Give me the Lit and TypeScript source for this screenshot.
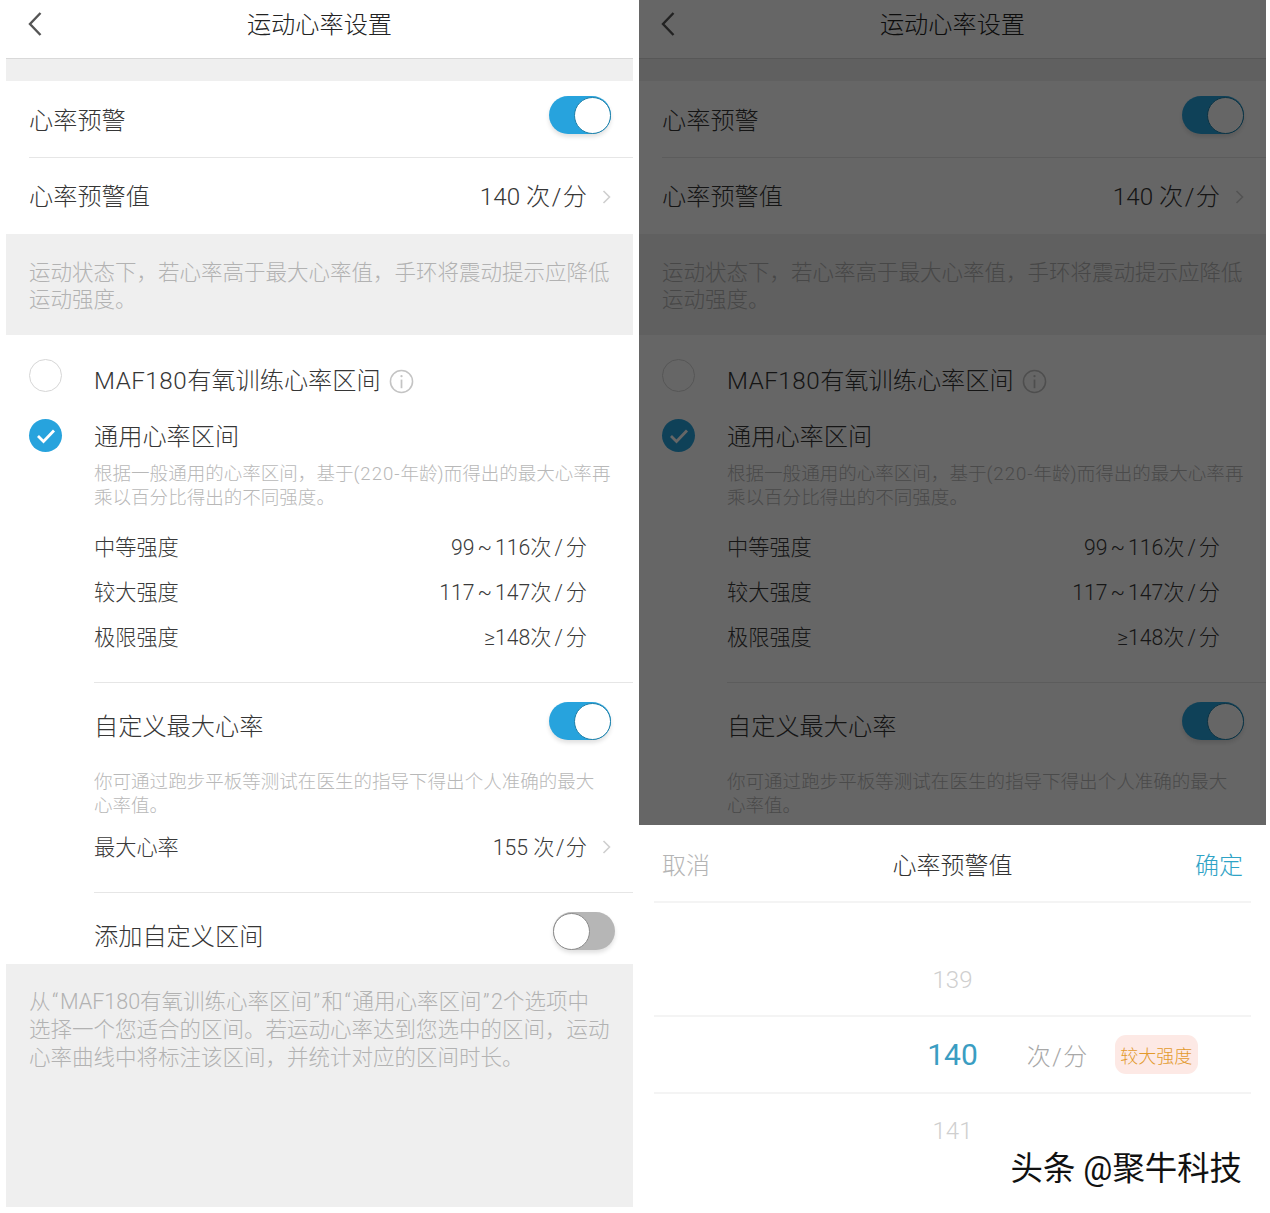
import { LitElement, html, css, svg } from "lit";
import { customElement, property } from "lit/decorators.js";

const chevronRight = html`<svg class="chev" viewBox="0 0 9 14" width="9" height="14"><path d="M1.5 1l6 6-6 6" fill="none" stroke="#cfcfcf" stroke-width="1.6"/></svg>`;

@customElement("hr-toggle")
class HrToggle extends LitElement {
  @property({ type: Boolean }) on = false;
  static styles = css`
    :host { display: block; width: 62px; height: 38px; }
    .track { width: 62px; height: 38px; border-radius: 19px; background: #b6b6b6; display: flex; align-items: center; box-sizing: border-box; box-shadow: 0 3px 4px rgba(0,0,0,.12); }
    .track.on { background: #27a3dd; justify-content: flex-end; }
    .thumb { width: 37px; height: 37px; border-radius: 50%; background: #fff; box-sizing: border-box; border: 1px solid #8b8b8b; }
    .on .thumb { border: 1.5px solid #1d7fa8; }
  `;
  render() {
    return html`<div class="track ${this.on ? "on" : ""}"><div class="thumb"></div></div>`;
  }
}

@customElement("hr-screen")
class HrScreen extends LitElement {
  @property({ type: Boolean }) dim = false;
  static styles = css`
    :host { display: block; width: 627px; height: 1207px; position: relative; overflow: hidden; background: #efefef; font-family: Roboto, "Noto Sans CJK SC", "Noto Sans", sans-serif; font-weight: 300; color: #363636; flex: none; }
    .head { height: 58px; background: #fff; border-bottom: 1px solid #d9d9d9; display: flex; align-items: flex-start; justify-content: center; position: relative; font-size: 24.2px; color: #222; line-height: 50px; }
    .back { position: absolute; left: 22px; top: 11px; }
    .gap { height: 22px; }
    .row { height: 76px; background: #fff; display: flex; align-items: center; justify-content: space-between; padding: 0 22px 0 23px; font-size: 24.2px; line-height: 34px; white-space: nowrap; }
    .row .t { margin-top: 4px; }
    .row .t2 { margin-top: 2px; }
    .row hr-toggle { margin-bottom: 8px; }
    .rule { height: 1px; background: #fff; }
    .rule i { display: block; height: 1px; margin-left: 23px; background: #e6e6e6; }
    .val { display: flex; align-items: center; gap: 15px; }
    .u { letter-spacing: 1.5px; margin-right: -1.5px; }
    .range .u { letter-spacing: 3px; margin-right: -3px; }
    .chev { flex: none; }
    .max .chev { margin-top: 3px; }
    .note { padding: 25px 23px 0; font-size: 21.5px; line-height: 27px; color: #b2b2b2; white-space: nowrap; }
    .note.a { height: 76px; }
    .note.b { padding-top: 24px; line-height: 28px; }
    .q { padding: 0 1.5px; }
    .section { background: #fff; padding: 24px 22px 0 23px; height: 605px; }
    .opt { display: flex; }
    .mark { width: 65px; flex: none; }
    .radio { width: 33px; height: 33px; border-radius: 50%; box-sizing: border-box; border: 1.5px solid #d6d6d6; display: flex; align-items: center; justify-content: center; }
    .radio.sel { background: #27a3dd; border: none; }
    .body { flex: 1; min-width: 0; }
    .opt.first { height: 60px; }
    .lab { font-size: 24.2px; line-height: 34px; display: flex; align-items: center; gap: 8px; white-space: nowrap; }
    .lab .l { letter-spacing: .5px; }
    .opt.first .lab { margin-top: 5px; }
    .opt .lab.g { margin-top: 1px; }
    .desc { font-size: 18.55px; line-height: 24px; color: #b8b8b8; white-space: nowrap; }
    .desc .l { letter-spacing: 1px; }
    .opt .desc.one { margin-top: 8px; }
    .ranges { margin-top: 13px; padding-right: 24px; }
    .range { height: 45px; display: flex; align-items: center; justify-content: space-between; font-size: 21.2px; color: #3a3a3a; white-space: nowrap; }
    .tl { margin: 0 3px; }
    .div { height: 1px; background: #e6e6e6; margin-right: -22px; }
    .ranges + .div { margin-top: 24px; }
    .sw { height: 76px; display: flex; align-items: center; justify-content: space-between; }
    .sw .lab { margin-top: 12px; }
    .desc.two { margin-top: 11px; }
    .max { height: 54px; display: flex; align-items: center; justify-content: space-between; font-size: 21.2px; color: #3a3a3a; white-space: nowrap; }
    .max + .div { margin-top: 20px; }
    .sw.last { height: 71px; }
    .sw.last .lab { margin-top: 17px; }
    .sw.last hr-toggle { margin-top: 5px; margin-right: -4px; }
    .shade { position: absolute; inset: 0; background: rgba(0,0,0,.6); }
    .sheet { position: absolute; left: 0; right: 0; top: 825px; bottom: 0; background: #fff; }
    .sh { height: 76px; display: flex; align-items: center; justify-content: space-between; padding: 0 23px; font-size: 24px; }
    .sh .c { color: #b4b4b4; } .sh .o { color: #2fa3c6; } .sh .m { color: #333; }
    .wheel { margin: 0 15px; display: flex; flex-direction: column; }
    .cell { display: grid; grid-template-columns: 1fr auto 1fr; align-items: center; border-top: 2px solid #f4f4f4; }
    .cell .n { grid-column: 2; font-size: 24px; color: #cfcfcf; }
    .cell.up { height: 114px; padding-top: 59px; box-sizing: border-box; align-items: start; }
    .cell.up .n, .cell.down .n { line-height: 36px; }
    .cell.sel { height: 75px; }
    .cell.sel .n { font-size: 30px; color: #3a9dc2; line-height: 44px; font-weight: 400; }
    .cell.down { height: 76px; box-sizing: border-box; }
    .side { display: flex; align-items: center; margin-left: 49px; white-space: nowrap; }
    .unit { font-size: 24px; color: #a8a8a8; letter-spacing: 1.5px; }
    .badge { margin-left: 26px; width: 83px; height: 39px; border-radius: 11px; background: #fde9e5; color: #e39a2c; font-size: 18px; display: flex; align-items: center; justify-content: center; }
    .wm { position: absolute; right: 24px; bottom: 16px; font-size: 32.4px; line-height: 44px; font-weight: 400; color: #111; white-space: nowrap; text-shadow: 1px 1px 0 #fff; }
  `;

  renderPage() {
    return html`
      <div class="head">
        <svg class="back" viewBox="0 0 14 26" width="14" height="26"><path d="M12.5 2L2 13l10.5 11" fill="none" stroke="#555" stroke-width="2.4"/></svg>
        <span>运动心率设置</span>
      </div>
      <div class="gap"></div>
      <div class="row"><span class="t">心率预警</span><hr-toggle on></hr-toggle></div>
      <div class="rule"><i></i></div>
      <div class="row"><span class="t2">心率预警值</span><span class="val t2"><span>140 <span class="u">次/分</span></span>${chevronRight}</span></div>
      <div class="note a">运动状态下&#xFF0C;若心率高于最大心率值&#xFF0C;手环将震动提示应降低<br />运动强度。</div>
      <div class="section">
        <div class="opt first">
          <div class="mark"><div class="radio"></div></div>
          <div class="body"><div class="lab"><span><span class="l">MAF180</span>有氧训练心率区间</span>
            <svg viewBox="0 0 26 26" width="25" height="25">${svg`<circle cx="13" cy="13" r="11.5" fill="none" stroke="#c4c4c4" stroke-width="1.6"/><path d="M13 11v9" stroke="#c4c4c4" stroke-width="1.8"/><circle cx="13" cy="7.5" r="1.2" fill="#c4c4c4"/>`}</svg>
          </div></div>
        </div>
        <div class="opt">
          <div class="mark"><div class="radio sel">
            <svg viewBox="0 0 20 16" width="20" height="16"><path d="M2 8l5.5 5.5L18 2.5" fill="none" stroke="#fff" stroke-width="2.8"/></svg>
          </div></div>
          <div class="body">
            <div class="lab g">通用心率区间</div>
            <div class="desc one">根据一般通用的心率区间&#xFF0C;基于<span class="l">(220-</span>年龄)而得出的最大心率再<br />乘以百分比得出的不同强度。</div>
            <div class="ranges">
              <div class="range"><span>中等强度</span><span>99<span class="tl">~</span>116<span class="u">次/分</span></span></div>
              <div class="range"><span>较大强度</span><span>117<span class="tl">~</span>147<span class="u">次/分</span></span></div>
              <div class="range"><span>极限强度</span><span>≥148<span class="u">次/分</span></span></div>
            </div>
            <div class="div"></div>
            <div class="sw"><div class="lab">自定义最大心率</div><hr-toggle on></hr-toggle></div>
            <div class="desc two">你可通过跑步平板等测试在医生的指导下得出个人准确的最大<br />心率值。</div>
            ${this.dim ? "" : html`
              <div class="max"><span>最大心率</span><span class="val"><span>155 <span class="u">次/分</span></span>${chevronRight}</span></div>
              <div class="div"></div>
              <div class="sw last"><div class="lab">添加自定义区间</div><hr-toggle></hr-toggle></div>
            `}
          </div>
        </div>
      </div>
      ${this.dim ? "" : html`<div class="note b">从<span class="q">“</span>MAF180有氧训练心率区间<span class="q">”</span>和<span class="q">“</span>通用心率区间<span class="q">”</span>2个选项中<br />选择一个您适合的区间。若运动心率达到您选中的区间&#xFF0C;运动<br />心率曲线中将标注该区间&#xFF0C;并统计对应的区间时长。</div>`}
    `;
  }

  renderSheet() {
    return html`
      <div class="shade"></div>
      <div class="sheet">
        <div class="sh"><span class="c">取消</span><span class="m">心率预警值</span><span class="o">确定</span></div>
        <div class="wheel">
          <div class="cell up"><span class="n">139</span></div>
          <div class="cell sel"><span class="n">140</span>
            <div class="side"><span class="unit">次/分</span><span class="badge">较大强度</span></div>
          </div>
          <div class="cell down"><span class="n">141</span></div>
        </div>
      </div>
      <div class="wm">头条 @聚牛科技</div>
    `;
  }

  render() {
    return html`${this.renderPage()}${this.dim ? this.renderSheet() : ""}`;
  }
}

@customElement("app-root")
class AppRoot extends LitElement {
  static styles = css`
    :host { display: block; width: 1270px; height: 1213px; background: #fff; }
    .wrap { display: flex; gap: 6px; padding-left: 6px; }
  `;
  render() {
    return html`<div class="wrap"><hr-screen></hr-screen><hr-screen dim></hr-screen></div>`;
  }
}
